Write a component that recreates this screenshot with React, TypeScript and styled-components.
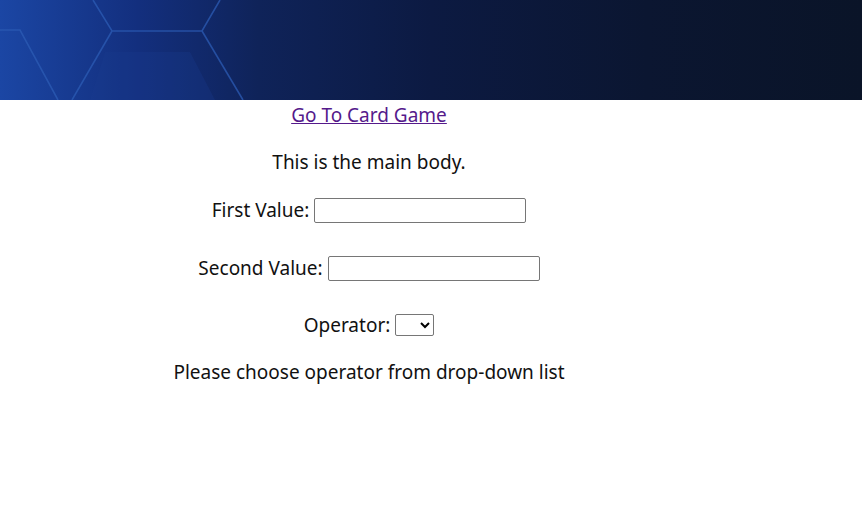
import styled, { createGlobalStyle } from 'styled-components';

const GlobalStyle = createGlobalStyle`
  body {
    margin: 0;
    background: #ffffff;
    font-family: 'Noto Sans', 'Open Sans', sans-serif;
    color: #111111;
  }
`;

const Header = styled.header`
  height: 100px;
  width: 100%;
  background: linear-gradient(90deg, #1b46a4 0%, #132f7e 16%, #0f2359 30%, #0c1a42 50%, #0b1631 75%, #0a1428 100%);
  overflow: hidden;
`;

const HexLines = styled.svg`
  display: block;
  width: 260px;
  height: 100px;
`;

const Main = styled.main`
  width: 738px;
  display: flex;
  flex-direction: column;
  align-items: center;
  font-size: 19px;
  text-align: center;
`;

const CardLink = styled.a`
  margin-top: 2px;
  color: #551a8b;
  text-decoration: underline;
`;

const BodyText = styled.p<{ top: number }>`
  margin: ${(p) => p.top}px 0 0;
`;

const Field = styled.label<{ top: number }>`
  margin-top: ${(p) => p.top}px;
  display: flex;
  align-items: center;
  gap: 5px;
`;

const TextBox = styled.input`
  width: 212px;
  height: 25px;
  box-sizing: border-box;
  border: 1px solid #767676;
  border-radius: 2px;
  font-size: 14px;
  padding: 1px 4px;
`;

const OperatorSelect = styled.select`
  width: 39px;
  height: 22px;
  box-sizing: border-box;
  border: 1px solid #767676;
  border-radius: 2px;
  background: #fff;
`;

export default function App() {
  return (
    <>
      <GlobalStyle />
      <Header>
        <HexLines viewBox="0 0 260 100">
          <path d="M105 52 L190 52 L215 100 L90 100 Z" fill="#1a3c90" opacity="0.3" />
          <g stroke="#2c5cb5" strokeWidth="1.6" fill="none" opacity="0.75">
            <path d="M93 0 L112 31 L202 31 L220 0" />
            <path d="M112 31 L72 100" />
            <path d="M202 31 L243 100" />
            <path d="M0 30 L20 30 L58 100" />
          </g>
        </HexLines>
      </Header>
      <Main>
        <CardLink href="#">Go To Card Game</CardLink>
        <BodyText top={21}>This is the main body.</BodyText>
        <Field top={22}>
          First Value: <TextBox type="text" />
        </Field>
        <Field top={32}>
          Second Value: <TextBox type="text" />
        </Field>
        <Field top={31}>
          Operator:
          <OperatorSelect>
            <option value=""></option>
            <option value="+">+</option>
            <option value="-">-</option>
            <option value="*">*</option>
            <option value="/">/</option>
          </OperatorSelect>
        </Field>
        <BodyText top={21}>Please choose operator from drop-down list</BodyText>
      </Main>
    </>
  );
}
